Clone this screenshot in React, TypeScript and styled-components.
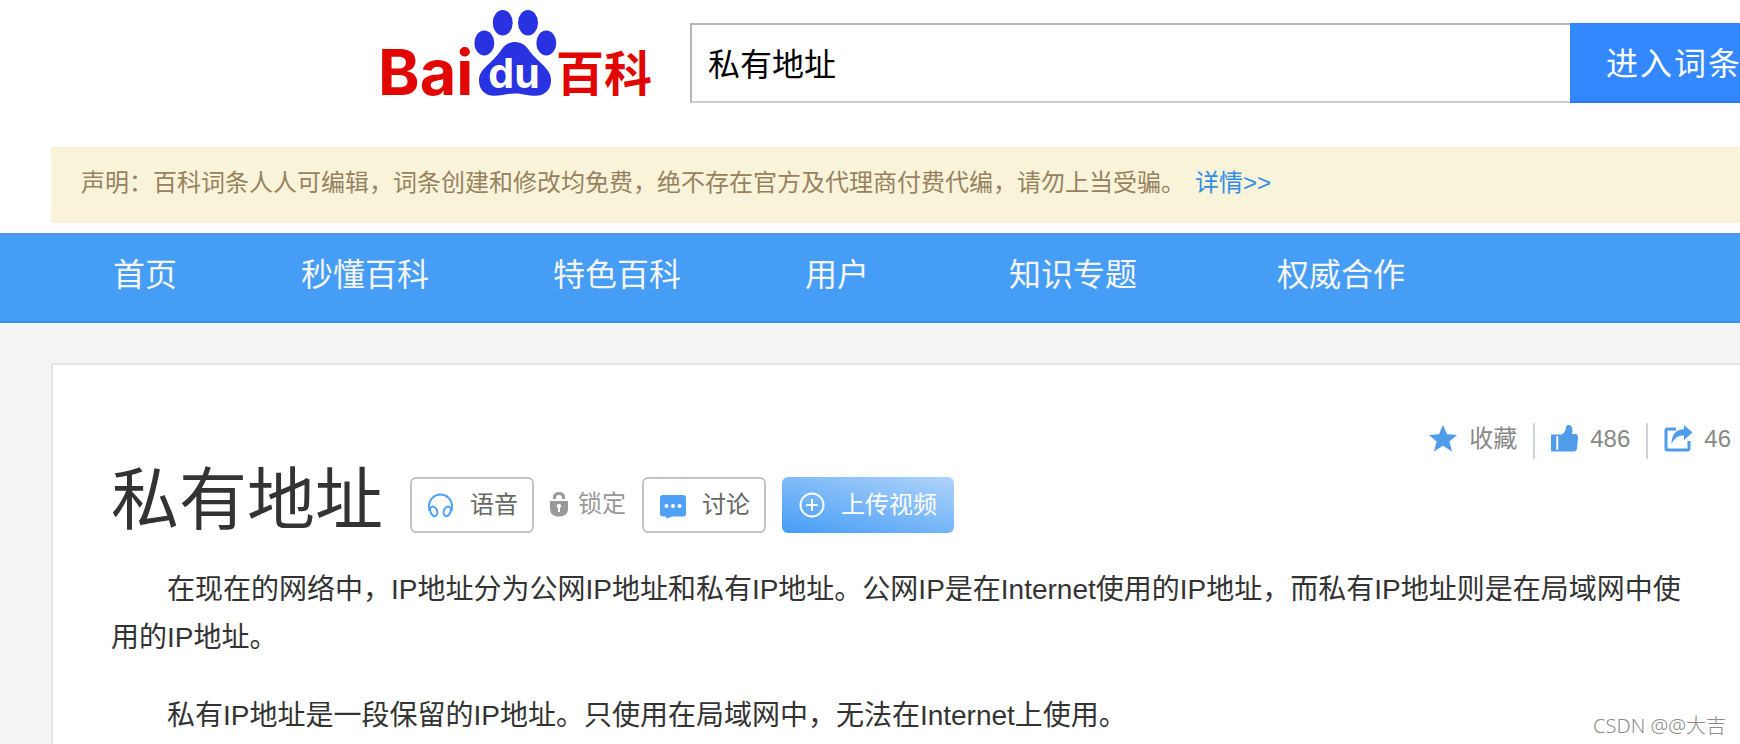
import React from 'react';
import styled, { createGlobalStyle } from 'styled-components';

const GlobalStyle = createGlobalStyle`
  * { box-sizing: border-box; }
  body {
    margin: 0;
    background: #fff;
    color: #333;
    font-family: "Liberation Sans", "Noto Sans CJK SC", sans-serif;
  }
  button, input { font-family: inherit; }
  a { text-decoration: none; }
`;

const Page = styled.div`
  position: relative;
  display: flex;
  flex-direction: column;
  min-height: 100vh;
  overflow: hidden;
`;

const Header = styled.header`
  display: flex;
  align-items: flex-start;
  padding-left: 370px;
`;

const LogoLink = styled.a`
  flex: none;
  width: 320px;
  height: 103px;
  svg { display: block; overflow: visible; }
`;

const SearchForm = styled.form`
  flex: 1;
  min-width: 0;
  display: flex;
  margin-top: 23px;
`;

const SearchInput = styled.input`
  flex: 1;
  min-width: 0;
  height: 80px;
  padding: 0 16px 2px;
  border: 2px solid #b6b6b6;
  border-right: 0;
  border-bottom-color: #ccc;
  border-radius: 0;
  background: #fff;
  color: #000;
  font-size: 32px;
  outline: none;
`;

const SearchButton = styled.button`
  flex: none;
  width: 170px;
  height: 80px;
  padding: 0 0 2px 36px;
  border: 0;
  border-bottom: 2px solid #2d78f4;
  background: #3388ff;
  color: #fff;
  font-size: 32px;
  letter-spacing: 2px;
  text-align: left;
  white-space: nowrap;
`;

const Notice = styled.p`
  margin: 44px 0 10px 51px;
  padding: 18px 30px 22px;
  background: #f9f3da;
  color: #96825f;
  font-size: 24px;
  line-height: 36px;
`;

const NoticeLink = styled.a`
  margin-left: 10px;
  color: #338de6;
`;

const Nav = styled.nav`
  display: flex;
  height: 90px;
  padding-left: 113px;
  border-top: 2px solid #5296dc;
  border-bottom: 2px solid #3b90ec;
  background: #459df5;
`;

const NavLink = styled.a<{ $gap: number }>`
  margin-right: ${(p) => p.$gap}px;
  color: #f5f5f5;
  font-size: 32px;
  line-height: 80px;
  white-space: nowrap;
`;

const Main = styled.main`
  flex: 1;
  display: flex;
  flex-direction: column;
  padding: 40px 0 0 51px;
  background: #f4f4f4;
`;

const Card = styled.article`
  flex: 1;
  padding: 58px 0 0 58px;
  border-top: 2px solid #e5e5e5;
  border-left: 2px solid #e5e5e5;
  background: #fff;
`;

const Actions = styled.div`
  display: flex;
  justify-content: flex-end;
  height: 36px;
  padding-right: 9px;
`;

const Action = styled.button`
  display: flex;
  align-items: center;
  gap: 12px;
  padding: 0 16px 4px;
  border: 0;
  border-right: 2px solid #cfd2d9;
  background: none;
  color: #888;
  font-size: 24px;
  line-height: 32px;
  &:last-child { padding-right: 0; border-right: 0; }
  svg { flex: none; margin-bottom: 2px; }
`;

const TitleRow = styled.div`
  display: flex;
  align-items: flex-end;
  gap: 16px;
  height: 74px;
`;

const Title = styled.h1`
  margin: 0 11px 0 0;
  font-size: 68px;
  font-weight: 400;
  line-height: 66px;
  white-space: nowrap;
`;

const ToolButton = styled.button<{ $primary?: boolean }>`
  display: flex;
  align-items: center;
  gap: 16px;
  height: 56px;
  padding: ${(p) => (p.$primary ? '0 17px' : '0 14px 0 15px')};
  border: ${(p) => (p.$primary ? '0' : '2px solid #c3c3c3')};
  border-radius: 6px;
  background: ${(p) => (p.$primary ? 'linear-gradient(15deg, #459df5, #b0d3fa)' : '#fff')};
  color: ${(p) => (p.$primary ? '#fff' : '#666')};
  font-size: 24px;
  line-height: 32px;
  white-space: nowrap;
  svg { flex: none; }
`;

const LockNote = styled.span`
  display: flex;
  align-items: center;
  gap: 10px;
  height: 56px;
  color: #999;
  font-size: 24px;
  line-height: 32px;
  padding-bottom: 2px;
  white-space: nowrap;
`;

const Summary = styled.div`
  margin-top: 33px;
  padding-right: 59px;
`;

const Paragraph = styled.p`
  margin: 0 0 30px;
  font-size: 28px;
  line-height: 48px;
  text-indent: 56px;
  &:last-child { margin-bottom: 0; }
`;

const Watermark = styled.span`
  position: absolute;
  right: 14px;
  bottom: 4px;
  color: #8c8c8c;
  font-family: "Noto Sans", "Noto Sans CJK SC", sans-serif;
  font-size: 20px;
  font-weight: 300;
  line-height: 28px;
`;

const Logo = () => (
  <svg width="300" height="103" viewBox="-10 0 300 103" role="img" aria-label="Baidu百科">
    <g fill="#e10602" fontWeight="700">
      <text x="-2" y="95" fontFamily="Inter, sans-serif" fontSize="63">Bai</text>
      <text x="176" y="91" fontFamily="Noto Sans CJK SC, sans-serif" fontSize="48">百科</text>
    </g>
    <g fill="#2932e1">
      <ellipse cx="104.3" cy="43" rx="10" ry="12.4" />
      <ellipse cx="122.7" cy="22.7" rx="10" ry="12.7" />
      <ellipse cx="148" cy="22.7" rx="10" ry="12.7" />
      <ellipse cx="166.3" cy="43" rx="10" ry="12.4" />
      <path d="M135 42c6.500 0 11 3.500 14.500 9 4 6 9.500 9.500 15 15.500 4 4.500 6.500 8 6.500 14 0 9-6 15.300-15.500 15.300-8 0-13-2.300-20.500-2.300s-13 2.300-21 2.300C105 95.800 99 89.500 99 80.500c0-6 2.500-9.500 7-14 6-6 10.500-9.500 14.500-15.500 3.500-5.500 8-9 14.500-9z" />
    </g>
    <text x="134" y="88" textAnchor="middle" fill="#fff" fontFamily="Inter, sans-serif" fontSize="41" fontWeight="700">du</text>
  </svg>
);

const StarIcon = () => (
  <svg width="28" height="28" viewBox="0 0 28 28" fill="#4f9ceb">
    <path d="M14 1l4 9.200 10 .8-7.600 6.600L23 27.500l-9-5.700-9 5.700 2.600-9.900L0 11l10-.8z" />
  </svg>
);

const ThumbIcon = () => (
  <svg width="27" height="28" viewBox="0 0 27 28" fill="#4f9ceb">
    <path d="M1 10.500h9.500c2.500-1 4-3.500 4.500-7C15.300 1.300 16.500 1 17.500 1c2.500 0 4 2 4 5 0 1.500-.3 3-.8 4h3.300c1.800 0 3 1.200 3 3l-1 11.500c-.3 2-1.500 3-3.500 3H1q-1 0-1-1v-15q0-1 1-1z" />
    <path d="M5.300 12h1.900v14H5.300z" fill="#fff" />
  </svg>
);

const ShareIcon = () => (
  <svg width="28" height="28" viewBox="0 0 28 28">
    <path d="M12 5H3.500Q2 5 2 6.500v18Q2 26 3.500 26h20q1.500 0 1.500-1.500V17" fill="none" stroke="#4f9ceb" strokeWidth="3" />
    <path d="M20 1l8.500 7.500L20 16v-4.500c-6 0-9.500 2.500-12.500 8.500C7.500 11 12 5.500 20 5.300z" fill="#4f9ceb" />
  </svg>
);

const HeadphonesIcon = () => (
  <svg width="27" height="26" viewBox="0 0 27 26" fill="none" stroke="#4fa0f7" strokeWidth="2">
    <path d="M2.500 19Q2 16.500 2 14A11.500 11.500 0 0 1 25 14q0 2.500-.5 5" />
    <ellipse cx="6.800" cy="19.300" rx="3.300" ry="5" transform="rotate(-20 6.800 19.300)" />
    <ellipse cx="20.200" cy="19.300" rx="3.300" ry="5" transform="rotate(20 20.200 19.300)" />
  </svg>
);

const LockIcon = () => (
  <svg width="18" height="26" viewBox="0 0 18 26">
    <path d="M4.500 8V6.500Q4.500 2.500 9 2.500t4.500 4V8" fill="none" stroke="#999" strokeWidth="3" />
    <path d="M0 10h18v7.500c0 5.500-3.500 8-9 8s-9-2.500-9-8z" fill="#999" />
    <path d="M9 13a2 2 0 0 1 1 3.800V21H8v-4.200A2 2 0 0 1 9 13z" fill="#fff" />
  </svg>
);

const ChatIcon = () => (
  <svg width="27" height="26" viewBox="0 0 27 26">
    <path d="M4 3h20q3 0 3 3v15.500q0 3-3 3H13L7 27v-2.500H4q-3 0-3-3V6q0-3 3-3z" fill="#4fa0f7" />
    <g fill="#fff">
      <circle cx="7.500" cy="14" r="2" />
      <circle cx="14" cy="14" r="2" />
      <circle cx="20.500" cy="14" r="2" />
    </g>
  </svg>
);

const PlusIcon = () => (
  <svg width="26" height="26" viewBox="0 0 26 26" fill="none" stroke="#fff" strokeWidth="2">
    <circle cx="13" cy="13" r="11.500" />
    <path d="M7 13h12M13 7v12" />
  </svg>
);

const navItems = [
  { label: '首页', gap: 124 },
  { label: '秒懂百科', gap: 124 },
  { label: '特色百科', gap: 124 },
  { label: '用户', gap: 140 },
  { label: '知识专题', gap: 140 },
  { label: '权威合作', gap: 0 },
];

const App: React.FC = () => (
  <Page>
    <GlobalStyle />
    <Header>
      <LogoLink href="#"><Logo /></LogoLink>
      <SearchForm onSubmit={(e) => e.preventDefault()}>
        <SearchInput type="text" aria-label="搜索词条" defaultValue="私有地址" />
        <SearchButton type="submit">进入词条</SearchButton>
      </SearchForm>
    </Header>
    <Notice>
      声明：百科词条人人可编辑，词条创建和修改均免费，绝不存在官方及代理商付费代编，请勿上当受骗。
      <NoticeLink href="#">详情&gt;&gt;</NoticeLink>
    </Notice>
    <Nav>
      {navItems.map((item) => (
        <NavLink key={item.label} href="#" $gap={item.gap}>{item.label}</NavLink>
      ))}
    </Nav>
    <Main>
      <Card>
        <Actions>
          <Action type="button"><StarIcon />收藏</Action>
          <Action type="button"><ThumbIcon />486</Action>
          <Action type="button"><ShareIcon />46</Action>
        </Actions>
        <TitleRow>
          <Title>私有地址</Title>
          <ToolButton type="button"><HeadphonesIcon />语音</ToolButton>
          <LockNote><LockIcon />锁定</LockNote>
          <ToolButton type="button"><ChatIcon />讨论</ToolButton>
          <ToolButton type="button" $primary><PlusIcon />上传视频</ToolButton>
        </TitleRow>
        <Summary>
          <Paragraph>
            在现在的网络中，IP地址分为公网IP地址和私有IP地址。公网IP是在Internet使用的IP地址，而私有IP地址则是在局域网中使用的IP地址。
          </Paragraph>
          <Paragraph>
            私有IP地址是一段保留的IP地址。只使用在局域网中，无法在Internet上使用。
          </Paragraph>
        </Summary>
      </Card>
    </Main>
    <Watermark>CSDN @@大吉</Watermark>
  </Page>
);

export default App;
